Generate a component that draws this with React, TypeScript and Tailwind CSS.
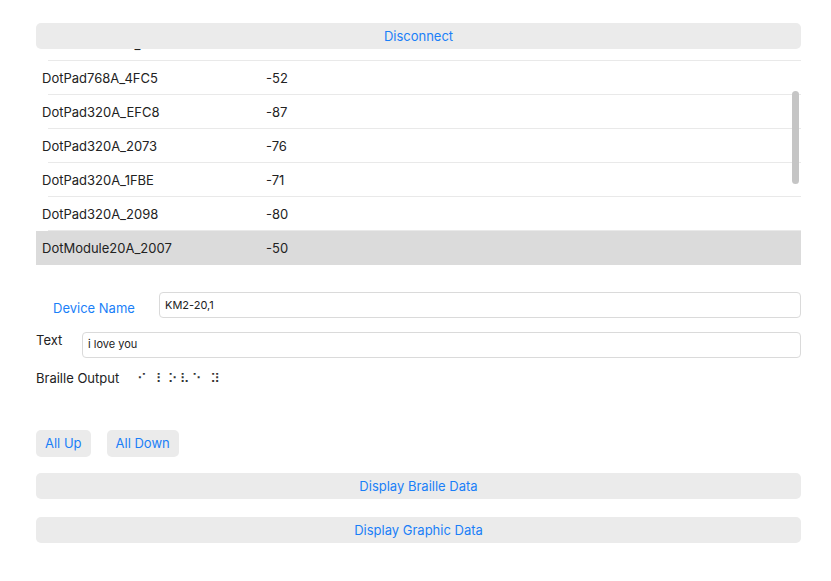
import React from "react";

const devices = [
	{ name: "DotModule20A_1C04", rssi: "" },
	{ name: "DotPad768A_4FC5", rssi: "-52" },
	{ name: "DotPad320A_EFC8", rssi: "-87" },
	{ name: "DotPad320A_2073", rssi: "-76" },
	{ name: "DotPad320A_1FBE", rssi: "-71" },
	{ name: "DotPad320A_2098", rssi: "-80" },
	{ name: "DotModule20A_2007", rssi: "-50", selected: true },
];

function GrayButton({ label, className = "" }: { label: string; className?: string }) {
	return (
		<button className={`flex h-[26px] items-center justify-center rounded-[5px] bg-[#ebebeb] pt-px text-[13px] text-[#1a7ff8] ${className}`}>
			{label}
		</button>
	);
}

export default function App() {
	return (
		<div className="h-[581px] w-[831px] bg-white pl-[36px] pr-[30px] pt-[23px] font-['Inter',sans-serif] text-[13px] text-[#222]">
			<GrayButton label="Disconnect" className="relative z-10 w-full" />

			<div className="relative h-[216px] overflow-hidden">
				<div className="-mt-[22px]">
					{devices.map((d, i) => (
						<div
							key={i}
							className={`relative flex h-[34px] items-center pl-[6px] pt-[2px] ${d.selected ? "bg-[#dbdbdb]" : ""}`}
						>
							<span className="w-[224px]">{d.name}</span>
							<span>{d.rssi}</span>
							{!d.selected && i < devices.length - 1 && (
								<div className="absolute bottom-0 left-[12px] right-0 h-px bg-[#e9e9e9]" />
							)}
						</div>
					))}
				</div>
				<div className="absolute right-[2px] top-[42px] h-[93px] w-[7px] rounded-full bg-[#c5c5c5]" />
			</div>

			<div className="mt-[27px] flex items-start">
				<span className="w-[123px] pl-[17px] pt-[7px] text-[#1a7ff8]">Device Name</span>
				<div className="flex h-[26px] flex-1 items-center rounded-[4px] border border-[#dadada] px-[5px] text-[11px]">
					KM2-20,1
				</div>
			</div>

			<div className="mt-[13px] flex">
				<span className="w-[46px] leading-[16px]">Text</span>
				<div className="flex h-[26px] flex-1 items-center rounded-[4px] border border-[#dadada] px-[5px] text-[11px]">
					i love you
				</div>
			</div>

			<div className="mt-[11px] flex items-center">
				<span className="w-[101px]">Braille Output</span>
				<span className="font-['DejaVu_Sans',sans-serif] text-[13px] tracking-[2.5px] text-[#333]">
					⠊ ⠇⠕⠧⠑ ⠽
				</span>
			</div>

			<div className="mt-[42px] flex gap-[16px]">
				<button className="h-[27px] rounded-[5px] bg-[#ebebeb] px-[9px] text-[13px] text-[#1a7ff8]">All Up</button>
				<button className="h-[27px] rounded-[5px] bg-[#ebebeb] px-[9px] text-[13px] text-[#1a7ff8]">All Down</button>
			</div>

			<GrayButton label="Display Braille Data" className="mt-[16px] w-full" />
			<GrayButton label="Display Graphic Data" className="mt-[18px] w-full" />
		</div>
	);
}
